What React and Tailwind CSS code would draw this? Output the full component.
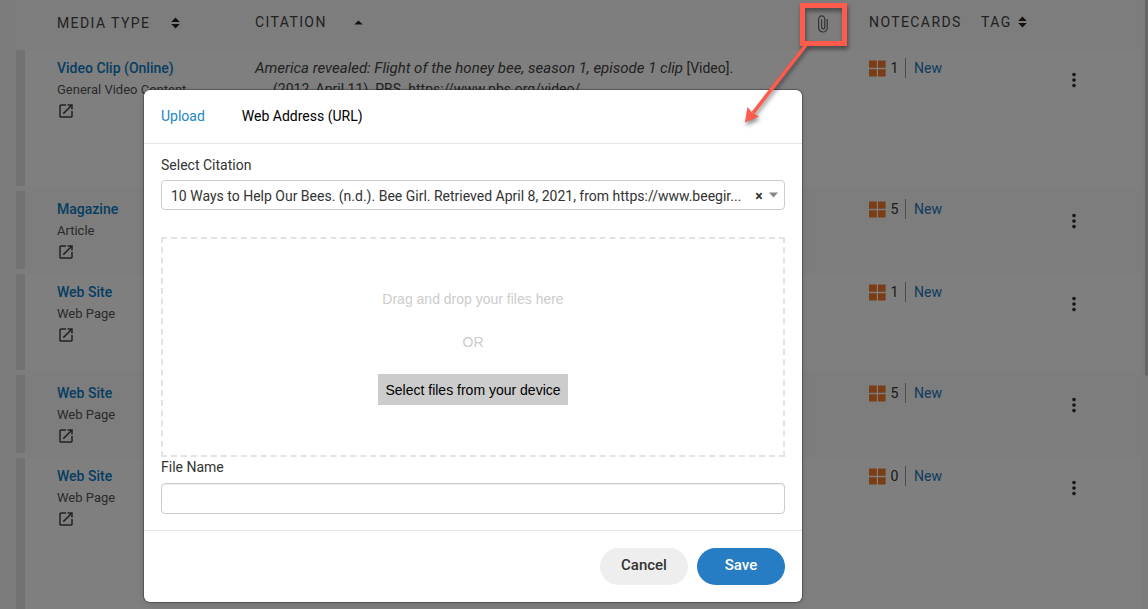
import React from "react";
import { MdMoreVert, MdOpenInNew } from "react-icons/md";

const rows = [
  { type: "Video Clip (Online)", kind: "General Video Content", cards: 1, height: "h-[136px]", citation: true },
  { type: "Magazine", kind: "Article", cards: 5, height: "h-[88px]" },
  { type: "Web Site", kind: "Web Page", cards: 1, height: "h-[96px]" },
  { type: "Web Site", kind: "Web Page", cards: 5, height: "h-[88px]" },
  { type: "Web Site", kind: "Web Page", cards: 0, height: "h-[152px]" },
];

function SortBoth() {
  return (
    <svg width="9" height="12" viewBox="0 0 9 12" fill="#222" aria-hidden="true">
      <path d="M4.5 0.6 8.8 5H0.2zM4.5 11.4 8.8 7H0.2z" />
    </svg>
  );
}

function SortUp() {
  return (
    <svg width="9" height="5" viewBox="0 0 9 5" fill="#222" aria-hidden="true">
      <path d="M4.5 0.4 8.7 4.6H0.3z" />
    </svg>
  );
}

function Paperclip() {
  return (
    <svg width="10" height="18" viewBox="0 0 10 18" fill="none" stroke="#666" strokeWidth="1.2" role="img" aria-label="Attachments" className="mx-auto">
      <path d="M9.2 4v8.700a4.300 4.300 0 0 1-8.600 0V4a3.100 3.100 0 0 1 6.200 0v8.300a1.600 1.600 0 0 1-3.200 0V4.500" />
    </svg>
  );
}

function CardsIcon() {
  return (
    <svg width="17" height="17" viewBox="0 0 17 17" fill="#f47a28" aria-hidden="true">
      <path d="M0 0.5h7.8v7.3H0zM9 0.5h7.6v7.3H9zM0 9.2h7.8v7.3H0zM9 9.2h7.6v7.3H9z" />
    </svg>
  );
}

function SourceRow({ row, striped }) {
  const pad = striped ? "pt-[13px]" : "pt-2";
  return (
    <tr className={`align-top ${row.height} ${striped ? "bg-[#fafafa]" : "bg-white"}`}>
      <td className={`h-[inherit] p-0 ${striped ? "py-[5px]" : ""}`}>
        <div className="h-full bg-[#e4e4e4]" />
      </td>
      <td className={`pl-8 leading-[21px] ${pad}`}>
        <a href="#source" className="block whitespace-nowrap text-[14px] font-medium text-[#0a7cc4]">{row.type}</a>
        <div className="whitespace-nowrap text-[13px] text-[#555]">{row.kind}</div>
        <a href="#open" aria-label="Open source" className="flex h-[22px] items-center text-[#444]">
          <MdOpenInNew size={18} />
        </a>
      </td>
      <td className={`pl-8 text-[14px] leading-[21px] text-[#444] ${pad}`}>
        {row.citation && (
          <>
            <p className="h-[21px] whitespace-nowrap">
              <i className="text-[15px]">America revealed: Flight of the honey bee, season 1, episode 1 clip</i> [Video].
            </p>
            <p className="pl-[18px]">(2012, April 11). PBS. https://www.pbs.org/video/</p>
          </>
        )}
      </td>
      <td />
      <td className={`pl-[31px] ${pad}`}>
        <div className="flex h-5 items-center text-[14px] text-[#333]">
          <CardsIcon />
          <span className="mr-[5px] ml-[3px] w-[11px] text-center">{row.cards}</span>
          <a href="#new" className="flex h-5 items-center border-l border-[#999] pl-2 text-[#2178bd]">New</a>
        </div>
      </td>
      <td />
      <td className={pad}>
        <button type="button" aria-label="More actions" className="mt-[11px] flex text-[#333]">
          <MdMoreVert size={22} className="-ml-[3px]" />
        </button>
      </td>
    </tr>
  );
}

function SourcesTable() {
  return (
    <div className="min-h-screen bg-[#f8f8f8] pl-4 pr-[7px] font-[Roboto,sans-serif]">
      <table className="w-full table-fixed border-collapse">
        <colgroup>
          <col className="w-[9px]" />
          <col className="w-[198px]" />
          <col />
          <col className="w-[30px]" />
          <col className="w-[143px]" />
          <col className="w-[85px]" />
          <col className="w-[75px]" />
        </colgroup>
        <thead>
          <tr className="h-[50px] bg-[#fafafa] text-left text-[14px] text-[#444]">
            <th />
            <th className="pb-1 pl-8 font-normal">
              <button type="button" className="flex items-center gap-[21px] whitespace-nowrap tracking-widest">
                MEDIA TYPE <SortBoth />
              </button>
            </th>
            <th className="pb-1.5 pl-8 font-normal">
              <button type="button" className="flex items-center gap-[27px] tracking-widest">
                CITATION <SortUp />
              </button>
            </th>
            <th className="pb-0.5 font-normal">
              <Paperclip />
            </th>
            <th className="pb-1.5 pl-[31px] font-normal tracking-widest">NOTECARDS</th>
            <th className="pb-1.5 font-normal">
              <button type="button" className="flex items-center gap-1.5 tracking-widest">
                TAG <SortBoth />
              </button>
            </th>
            <th />
          </tr>
        </thead>
        <tbody>
          {rows.map((row, i) => (
            <SourceRow key={i} row={row} striped={i % 2 === 1} />
          ))}
        </tbody>
      </table>
    </div>
  );
}

function AttachDialog() {
  return (
    <div
      role="dialog"
      aria-label="Attach file"
      className="w-full max-w-[658px] self-start rounded-md bg-white font-[Roboto,sans-serif] text-[14px] text-[#333] shadow-[0_0_1px_1px_rgba(0,0,0,0.3),0_3px_9px_rgba(0,0,0,0.1)]"
    >
      <div className="flex h-[54px] items-center gap-[37px] border-b border-[#e5e5e5] px-[17px]">
        <button type="button" className="text-[#1d86c8]">Upload</button>
        <button type="button" className="text-black">Web Address (URL)</button>
      </div>
      <form className="px-[17px] pt-[11px] pb-4">
        <label htmlFor="citation" className="block h-[25px] leading-5">Select Citation</label>
        <div className="flex h-[30px] items-center rounded border border-[#ccc]">
          <select id="citation" className="min-w-0 flex-1 appearance-none bg-transparent pt-0.5 pl-[9px]">
            <option>10 Ways to Help Our Bees. (n.d.). Bee Girl. Retrieved April 8, 2021, from https://www.beegir...</option>
          </select>
          <button type="button" aria-label="Clear citation" className="w-5 pt-0.5 text-center font-bold">×</button>
          <svg width="9" height="6" viewBox="0 0 9 6" fill="#888" aria-hidden="true" className="mr-1.5">
            <path d="M0 0.5h9L4.5 5.5z" />
          </svg>
        </div>
        <div className="mt-[27px] flex h-[220px] flex-col items-center border-2 border-dashed border-[#e3e3e3] pt-[50px] font-['Liberation_Sans',sans-serif] text-[#ccc]">
          <p className="leading-5">Drag and drop your files here</p>
          <p className="mt-[23px] leading-5">OR</p>
          <button type="button" className="mt-[22px] h-[31px] bg-[#ccc] px-[7px] pt-0.5 text-black">Select files from your device</button>
        </div>
        <label htmlFor="file-name" className="block h-[26px] leading-5">File Name</label>
        <input id="file-name" type="text" className="block h-[31px] w-full rounded border border-[#ccc] px-2 shadow-[inset_0_1px_1px_rgba(0,0,0,0.075)]" />
      </form>
      <div className="flex justify-end gap-[9px] border-t border-[#e5e5e5] px-[17px] py-[17px] text-[15px] font-medium">
        <button type="button" className="h-[37px] w-[88px] rounded-full bg-[#eee] pb-0.5 text-[#333]">Cancel</button>
        <button type="button" className="h-[37px] w-[88px] rounded-full bg-[#277dc4] pb-0.5 text-white">Save</button>
      </div>
    </div>
  );
}

function Callout() {
  return (
    <svg
      width="112"
      height="136"
      viewBox="740 0 112 136"
      className="pointer-events-none absolute top-0 right-[296px] drop-shadow-[1px_3px_2px_rgba(0,0,0,0.45)]"
      fill="none"
      aria-hidden="true"
    >
      <rect x="802.5" y="5.500" width="42" height="38" stroke="#ff5b4c" strokeWidth="5" />
      <path d="M806 45 753 113" stroke="#ff5b4c" strokeWidth="3.5" />
      <path d="M745 122.500 747.500 107 752 112.500 759 116.500z" fill="#ff5b4c" />
    </svg>
  );
}

export default function App() {
  return (
    <div className="relative h-screen overflow-hidden">
      <SourcesTable />
      <div className="absolute inset-0 flex bg-black/50 pt-[90px] pr-4 pl-36">
        <AttachDialog />
      </div>
      <div className="absolute top-0 right-0 h-[376px] w-[3px] rounded-b bg-[#666]" />
      <Callout />
    </div>
  );
}
